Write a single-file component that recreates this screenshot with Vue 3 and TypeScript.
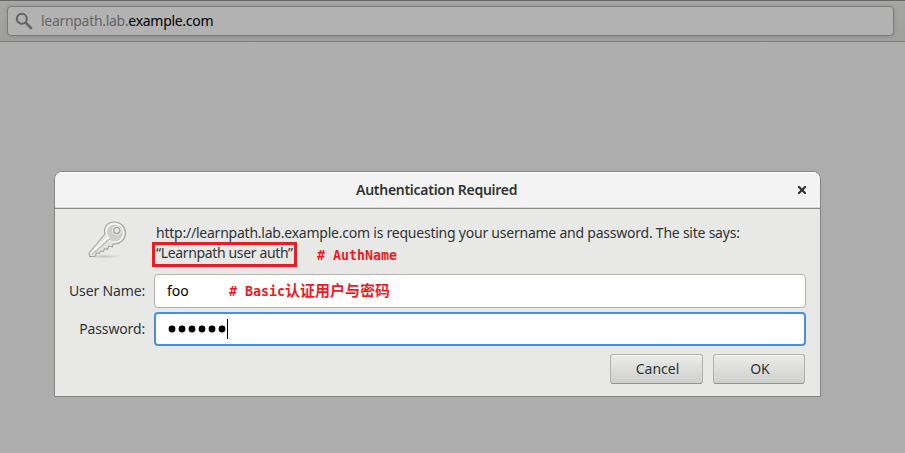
<script setup lang="ts">
import { ref } from 'vue'

const site = 'http://learnpath.lab.example.com'
const realm = ref('Learnpath user auth')
const userName = ref('foo')
const passwordLength = ref(6)
</script>

<template>
  <div class="window">
    <header class="toolbar">
      <div class="address">
        <svg class="search" viewBox="0 0 18 18" width="18" height="18">
          <circle cx="6.8" cy="6.8" r="5" fill="none" stroke="#666" stroke-width="2.1" />
          <path d="M10.6 10.6 16 16" stroke="#666" stroke-width="2.6" stroke-linecap="round" />
        </svg>
        <span class="url"><span class="sub">learnpath.lab.</span>example.com</span>
      </div>
    </header>
    <main class="page">
      <section class="dialog">
        <div class="titlebar">
          <span class="title">Authentication Required</span>
          <svg class="close" viewBox="0 0 8 8" width="8" height="8">
            <path d="M1 1 7 7M7 1 1 7" stroke="#2e3436" stroke-width="2.2" stroke-linecap="square" />
          </svg>
        </div>
        <div class="body">
          <div class="message">
            <svg class="key" viewBox="0 0 44 42" width="44" height="42">
              <defs>
                <linearGradient id="metal" x1="0" y1="0" x2="1" y2="1">
                  <stop offset="0" stop-color="#f4f4f2" />
                  <stop offset="1" stop-color="#d2d3cf" />
                </linearGradient>
                <radialGradient id="shade">
                  <stop offset="0" stop-color="#999" stop-opacity=".5" />
                  <stop offset="1" stop-color="#999" stop-opacity="0" />
                </radialGradient>
              </defs>
              <ellipse cx="19" cy="36.500" rx="16" ry="2" fill="url(#shade)" />
              <path
                d="M20 14C18 8 22 2 29 2C36 2 40.500 7 40.500 13C40.500 20 35 24 30 24L28 24L27.5 27L24 26L22.5 29.5L19.5 28.5L18.5 31.5L15.5 31L14.5 33.5L11.5 33L10 36.5L4.500 36.5L4 33Z"
                fill="url(#metal)" stroke="#a3a5a0" stroke-width="1.1" stroke-linejoin="round" />
              <path
                d="M22 15C20 9 24 4 29.500 4C35.500 4 38.500 8 38.500 13C38.500 18.500 34 22 30 22L25 21.500Z"
                fill="#cfd0cd" stroke="#fafaf8" stroke-width="1.1" />
              <path d="M7 34.500 25 18.500" stroke="#b9bbb6" stroke-width="1.2" />
              <path d="M6 33 23 17.500" stroke="#fff" stroke-width="1.1" />
              <circle cx="31.800" cy="10.500" r="4.400" fill="none" stroke="#f0f0ee" stroke-width=".8" />
              <circle cx="31.800" cy="10.500" r="3" fill="#e8e8e6" stroke="#a0a29d" stroke-width="1.1" />
            </svg>
            <div class="copy">
              <div class="line request">{{ site }} is requesting your username and password. The site says:</div>
              <div class="line second">
                <span class="realm">“{{ realm }}”</span>
                <span class="note">#&nbsp;AuthName</span>
              </div>
            </div>
          </div>
          <div class="field">
            <span class="label user">User Name:</span>
            <div class="entry">
              <span class="value">{{ userName }}</span>
              <span class="note">#&nbsp;Basic<span class="cjk">认证用户与密码</span></span>
            </div>
          </div>
          <div class="field">
            <span class="label pass">Password:</span>
            <div class="entry focused">
              <i v-for="n in passwordLength" :key="n" class="dot"></i>
              <i class="caret"></i>
            </div>
          </div>
          <div class="actions">
            <button class="cancel">Cancel</button>
            <button class="ok">OK</button>
          </div>
        </div>
      </section>
    </main>
  </div>
</template>

<style>
body { margin: 0; }
</style>

<style scoped>
* { box-sizing: border-box; }
.window {
  width: 905px; height: 453px; overflow: hidden;
  background: #adadad; color: #2e3436;
  font: 14px/20px "Noto Sans", "Open Sans", sans-serif;
  white-space: nowrap;
}
.toolbar {
  height: 42px; padding: 5px 11px 0 7px;
  border-top: 1px solid #666; border-bottom: 1px solid #7d7d7b;
  background: linear-gradient(#a6a6a4, #9f9f9d);
}
.address {
  height: 30px; display: flex; align-items: center; padding-left: 7px;
  border: 1px solid #7b7b79; border-radius: 4px; background: #b2b2b2;
  box-shadow: 0 0 4px rgba(0, 0, 0, .12);
}
.url { margin-left: 8px; color: #000; letter-spacing: -.3px; }
.sub { color: #666; }
.page { padding: 129px 0 0 54px; }
.dialog {
  width: 767px; height: 226px; overflow: hidden;
  border: 1px solid #858585; border-radius: 8px 8px 0 0; background: #e8e8e6;
}
.titlebar {
  height: 37px; display: flex; align-items: center; justify-content: flex-end;
  padding-right: 14px; background: #f3f3f3;
  border-bottom: 1px solid #8b8c89; box-shadow: inset 0 1px #fff, inset 0 -1px #d9d9d7;
}
.title { width: 161px; margin-right: 281px; font-weight: 600; font-size: 14px; letter-spacing: -.27px; }
.body { padding: 12px 14px 0 0; }
.message { display: flex; height: 53px; padding-left: 30px; }
.key { margin-top: -1px; }
.copy { padding: 2px 0 0 27px; }
.request { letter-spacing: -.23px; }
.second { display: flex; }
.realm {
  height: 25px; width: 145px; margin: -1px 0 0 -4px; padding-left: 1px;
  border: 3px solid #ed1c24; line-height: 16px; letter-spacing: -.35px;
}
.note {
  color: #ed1c24; font: bold 13.300px/20px "DejaVu Sans Mono", monospace;
}
.second .note { margin: 3px 0 0 20px; }
.field { display: flex; align-items: center; height: 34px; margin-bottom: 4px; }
.label { width: 90px; margin-right: 9px; text-align: right; letter-spacing: -.15px; }
.entry {
  width: 652px; height: 34px; display: flex; align-items: center; padding-left: 12px;
  border: 1px solid #b3b3ae; border-radius: 4px; background: #fff; color: #000;
}
.value { width: 62px; }
.cjk { font: bold 15px/20px "Noto Sans CJK SC", sans-serif; }
.focused { border: 2px solid #4a90d9; padding-left: 13px; }
.dot { width: 6px; height: 6px; margin: 0 4px 0 0; border-radius: 50%; background: #000; box-shadow: 0 0 0 .4px #000; }
.caret { width: 1px; height: 20px; margin-left: -2px; background: #000; }
.actions { display: flex; justify-content: flex-end; gap: 10px; padding: 4px 1px 0 0; }
button {
  height: 30px; padding: 0 0 0 2px; border: 1px solid #b0b0ac; border-bottom-color: #92928f;
  border-radius: 3px; background: linear-gradient(#ebebea, #d0d0ce);
  box-shadow: inset 0 1px #f8f8f7; font: inherit; color: #2e3436;
}
.cancel { width: 93px; }
.ok { width: 92px; }
</style>
